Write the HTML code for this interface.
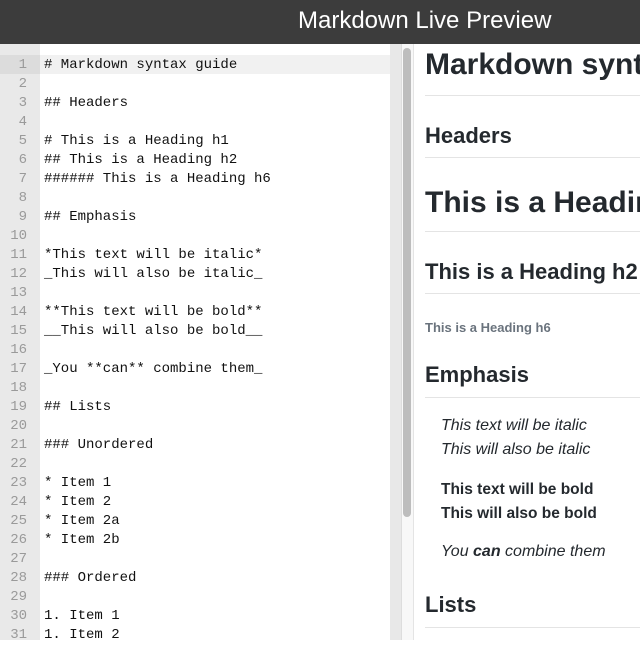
<!DOCTYPE html>
<html><head><style>
*{margin:0;padding:0;box-sizing:border-box}
body{width:640px;height:640px;overflow:hidden;background:#fff;position:relative;font-family:"Liberation Sans",sans-serif}
#hdr{position:absolute;left:0;top:0;width:640px;height:44px;background:#3c3c3c;color:#fff;font-size:24px;line-height:42px;padding-left:298px;white-space:nowrap;overflow:hidden}
#gut{position:absolute;left:0;top:44px;width:40px;height:596px;background:#e9e9e9}
#act{position:absolute;left:40px;top:55px;width:350px;height:19px;background:#f1f1f1}
#actg{position:absolute;left:0;top:55px;width:40px;height:19px;background:#dcdcdc}
.ln{position:absolute;left:0;width:27px;text-align:right;font:14px/19px "Liberation Mono",monospace;color:#9a9a9a}
.cd{position:absolute;left:44px;font:14px/19px "Liberation Mono",monospace;color:#111;white-space:pre}
#trk{position:absolute;left:390px;top:44px;width:11px;height:596px;background:#e8e8e8}
#trk2{position:absolute;left:401px;top:44px;width:13px;height:596px;background:#f8f8f8;border-left:1px solid #ddd;border-right:1px solid #e4e4e4}
#thumb{position:absolute;left:403px;top:48px;width:8px;height:469px;background:#bdbdbd;border-radius:4px}
#pv{position:absolute;left:0;top:0;width:640px;height:640px;overflow:hidden}
.p{position:absolute;left:425px;white-space:nowrap;color:#24292e;font-family:"Liberation Sans",sans-serif}
.hr{position:absolute;left:425px;width:215px;height:1px;background:#e4e4e4}
</style></head><body>
<div id="hdr">Markdown Live Preview</div>
<div id="gut"></div><div id="actg"></div><div id="act"></div>
<div id="trk"></div><div id="trk2"></div><div id="thumb"></div>
<div id="lines"></div>
<div id="pv">
<div class="p" style="top:48px;font-size:30px;font-weight:bold">Markdown syntax guide</div>
<div class="hr" style="top:95px"></div>
<div class="p" style="top:123px;font-size:22px;font-weight:bold">Headers</div>
<div class="hr" style="top:157px"></div>
<div class="p" style="top:186px;font-size:30px;font-weight:bold">This is a Heading h1</div>
<div class="hr" style="top:231px"></div>
<div class="p" style="top:259px;font-size:22px;font-weight:bold">This is a Heading h2</div>
<div class="hr" style="top:293px"></div>
<div class="p" style="top:320px;font-size:13px;font-weight:bold;color:#6a737d">This is a Heading h6</div>
<div class="p" style="top:362px;font-size:22px;font-weight:bold">Emphasis</div>
<div class="hr" style="top:397px"></div>
<div class="p" style="left:441px;top:414px;font-size:16px;line-height:24px;font-style:italic">This text will be italic<br>This will also be italic</div>
<div class="p" style="left:441px;top:478px;font-size:15.5px;line-height:24px;font-weight:bold">This text will be bold<br>This will also be bold</div>
<div class="p" style="left:441px;top:543px;font-size:16px;font-style:italic">You <b>can</b> combine them</div>
<div class="p" style="top:592px;font-size:22px;font-weight:bold">Lists</div>
<div class="hr" style="top:627px"></div>
</div>
<script>
var L=["# Markdown syntax guide","","## Headers","","# This is a Heading h1","## This is a Heading h2","###### This is a Heading h6","","## Emphasis","","*This text will be italic*","_This will also be italic_","","**This text will be bold**","__This will also be bold__","","_You **can** combine them_","","## Lists","","### Unordered","","* Item 1","* Item 2","* Item 2a","* Item 2b","","### Ordered","","1. Item 1","1. Item 2"];
var h="";for(var i=0;i<L.length;i++){var t=56+19*i;h+='<div class="ln" style="top:'+t+'px">'+(i+1)+'</div><div class="cd" style="top:'+t+'px">'+L[i]+'</div>';}
document.getElementById("lines").innerHTML=h;
</script>
</body></html>
